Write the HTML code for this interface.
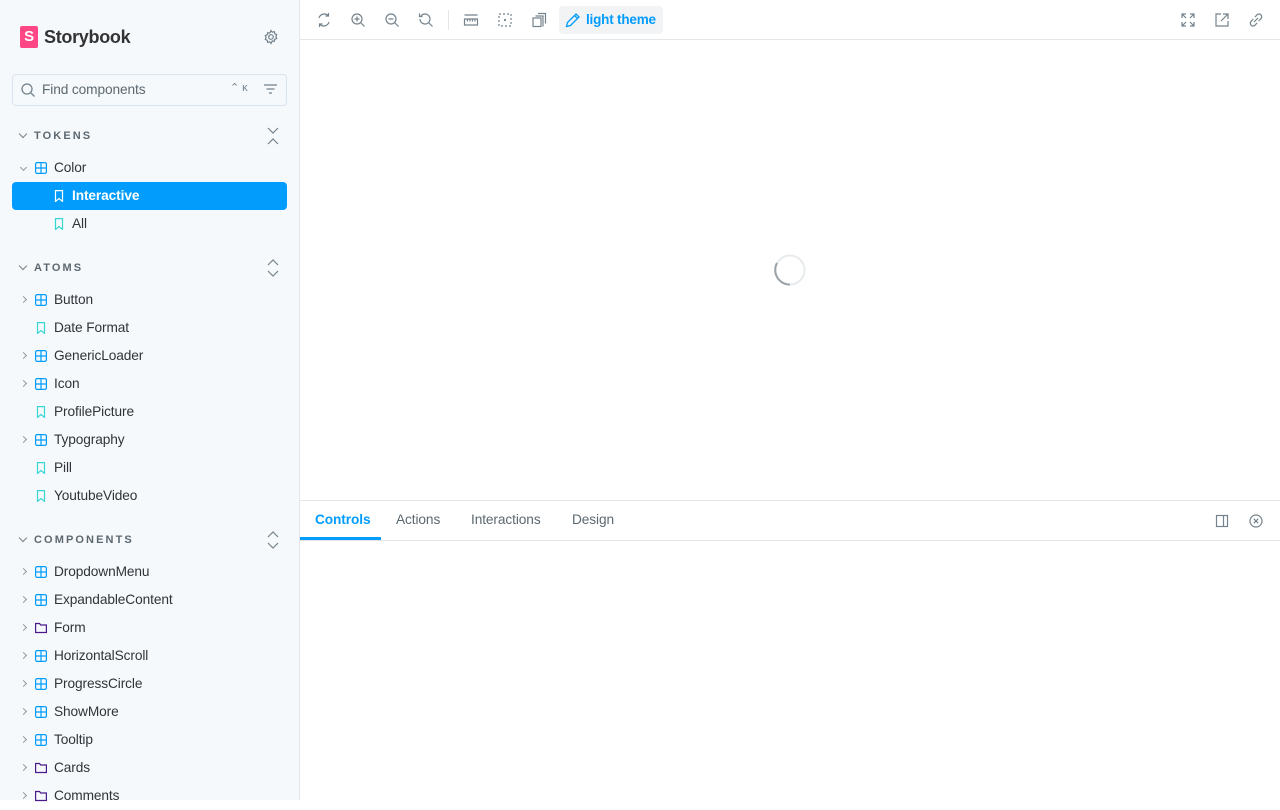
<!DOCTYPE html>
<html><head><meta charset="utf-8"><style>
*{box-sizing:border-box;margin:0;padding:0}
body{width:1280px;height:800px;overflow:hidden;font-family:"Liberation Sans",sans-serif;font-size:13.7px;letter-spacing:-0.1px;color:#2e3438;background:#fff;position:relative}
.sb{position:absolute;left:0;top:0;width:300px;height:800px;background:#f6f9fc;border-right:1px solid #e3e6e8}
.logo{position:absolute;left:20px;top:26px;display:flex;align-items:center;gap:6px;font-weight:bold;font-size:18px;letter-spacing:-0.3px;color:#333}
.s{width:18px;height:22px;background:#ff4785;border-radius:2px;color:#fff;font-size:15px;text-align:center;line-height:22px;font-weight:bold}
.search{position:absolute;left:12px;top:74px;width:275px;height:32px;border:1px solid #d9e4ee;border-radius:4px;background:#f6f9fc;color:#5c6870;font-size:13.7px;line-height:30px;padding-left:29px}
.hdr{position:absolute;left:18px;font-size:11px;font-weight:bold;letter-spacing:2.1px;color:#5c6870}
.hdr:before{content:"";display:inline-block;width:5px;height:5px;border-right:1px solid #798186;border-bottom:1px solid #798186;transform:rotate(45deg);margin:0 8px -1px 2px;position:relative;top:-3px}
.row{position:absolute;left:12px;width:275px;height:28px;line-height:28px}
.row .t{position:absolute;left:42px}
.row .ch{position:absolute;left:9px;top:11px;width:5px;height:5px;border-right:1px solid #8f979c;border-top:1px solid #8f979c;transform:rotate(45deg)}
.ic{position:absolute;top:8px;left:23px;width:12px;height:12px}
.sel{background:#029cfd;color:#fff;font-weight:bold;border-radius:4px}
.tb{position:absolute;left:300px;top:0;width:980px;height:40px;border-bottom:1px solid #e3e6e8}
.tab{position:absolute;top:512px;font-size:13.7px;color:#5c6870}
svg{position:absolute}
</style></head><body>
<div class="sb">
<div class="logo"><div class="s">S</div>Storybook</div>
<svg style="left:263px;top:29px" width="16" height="16" viewBox="0 0 16 16" fill="none" stroke="#73828c" stroke-width="1.2"><circle cx="8" cy="8" r="2.3"/><path d="M8 1.5l1.3 1.7 2-.6.4 2.1 2 .9-.8 1.9.8 1.9-2 .9-.4 2.1-2-.6L8 14.5l-1.3-1.7-2 .6-.4-2.1-2-.9.8-1.9-.8-1.9 2-.9.4-2.1 2 .6z"/></svg>
<div class="search">Find components</div>
<svg style="left:20px;top:82px" width="16" height="16" viewBox="0 0 16 16" fill="none" stroke="#73828c" stroke-width="1.3"><circle cx="7" cy="7" r="5"/><path d="M11 11l3.5 3.5"/></svg>
<div style="position:absolute;left:230px;top:81px;font-size:11px;color:#73828c">⌃ ĸ</div>
<svg style="left:263px;top:83px" width="15" height="12" viewBox="0 0 15 12" stroke="#73828c" stroke-width="1.2"><path d="M1 2h13M3.5 6h8M6 10h3"/></svg>

<div class="hdr" style="top:130px">TOKENS</div>
<svg style="left:266px;top:127px" width="14" height="18" viewBox="0 0 14 18" fill="none" stroke="#73828c" stroke-width="1.2"><path d="M2 1l5 5 5-5M2 17l5-5 5 5"/></svg>
<div class="row" style="top:154px"><span class="ch" style="transform:rotate(135deg)"></span><svg class="ic" viewBox="0 0 12 12" fill="none" stroke="#029cfd" stroke-width="1.2"><rect x=".6" y=".6" width="10.8" height="10.8" rx="1.5"/><path d="M6 .6v10.8M.6 6h10.8"/></svg><span class="t">Color</span></div>
<div class="row sel" style="top:182px"><svg class="ic" style="left:41px" viewBox="0 0 12 12" fill="none" stroke="#fff" stroke-width="1.2"><path d="M2.5.6h7v10.8L6 8.5l-3.5 2.9z"/></svg><span class="t" style="left:60px">Interactive</span></div>
<div class="row" style="top:210px"><svg class="ic" style="left:41px" viewBox="0 0 12 12" fill="none" stroke="#37d5d3" stroke-width="1.2"><path d="M2.5.6h7v10.8L6 8.5l-3.5 2.9z"/></svg><span class="t" style="left:60px">All</span></div>

<div class="hdr" style="top:262px">ATOMS</div>
<svg style="left:266px;top:259px" width="14" height="18" viewBox="0 0 14 18" fill="none" stroke="#73828c" stroke-width="1.2"><path d="M2 6l5-5 5 5M2 12l5 5 5-5"/></svg>
<div class="hdr" style="top:534px">COMPONENTS</div>
<svg style="left:266px;top:531px" width="14" height="18" viewBox="0 0 14 18" fill="none" stroke="#73828c" stroke-width="1.2"><path d="M2 6l5-5 5 5M2 12l5 5 5-5"/></svg>
<div id="list"></div>
</div>

<div class="tb"></div>
<svg style="left:316px;top:12px" width="16" height="16" viewBox="0 0 16 16" fill="none" stroke="#73828c" stroke-width="1.2"><path d="M3 6a5.5 5.5 0 0 1 9.5-2M13 10a5.5 5.5 0 0 1-9.5 2M12.5 1v3h-3M3.5 15v-3h3"/></svg>
<svg style="left:350px;top:12px" width="16" height="16" viewBox="0 0 16 16" fill="none" stroke="#73828c" stroke-width="1.2"><circle cx="7" cy="7" r="5"/><path d="M11 11l3.5 3.5M7 4.5v5M4.5 7h5"/></svg>
<svg style="left:384px;top:12px" width="16" height="16" viewBox="0 0 16 16" fill="none" stroke="#73828c" stroke-width="1.2"><circle cx="7" cy="7" r="5"/><path d="M11 11l3.5 3.5M4.5 7h5"/></svg>
<svg style="left:418px;top:12px" width="16" height="16" viewBox="0 0 16 16" fill="none" stroke="#73828c" stroke-width="1.2"><path d="M3 4a5 5 0 1 1-1 3M11 11l3.5 3.5M1.5 1.5v3h3"/></svg>
<div style="position:absolute;left:448px;top:10px;width:1px;height:20px;background:#e3e6e8"></div>
<svg style="left:463px;top:12px" width="16" height="16" viewBox="0 0 16 16" fill="none" stroke="#73828c" stroke-width="1.2"><path d="M1.5 3h13M1.5 7h13v6h-13zM4.5 7v2.5M7 7v2.5M9.5 7v2.5M12 7v2.5"/></svg>
<svg style="left:497px;top:12px" width="16" height="16" viewBox="0 0 16 16" fill="none" stroke="#73828c" stroke-width="1.2" stroke-dasharray="2 2"><rect x="2" y="2" width="12" height="12"/><circle cx="8" cy="8" r=".5" stroke-dasharray="none"/></svg>
<svg style="left:531px;top:12px" width="16" height="16" viewBox="0 0 16 16" fill="none" stroke="#73828c" stroke-width="1.2"><rect x="2" y="6" width="8" height="8.5"/><path d="M4.5 4h7.5v10.5M7 1.5h7.5v10"/></svg>
<div style="position:absolute;left:559px;top:6px;width:104px;height:28px;background:#f1f3f5;border-radius:4px;color:#029cfd;font-weight:bold;font-size:13.5px;letter-spacing:-0.2px;line-height:28px;padding-left:27px">light theme</div>
<svg style="left:565px;top:12px" width="16" height="16" viewBox="0 0 16 16" fill="none" stroke="#029cfd" stroke-width="1.3"><path d="M11 2l3 3-8.5 8.5-4 1 1-4zM9.5 3.5l3 3"/></svg>
<svg style="left:1181px;top:13px" width="14" height="14" viewBox="0 0 14 14" fill="none" stroke="#73828c" stroke-width="1.2"><path d="M1 5V1h4M9 1h4v4M13 9v4H9M5 13H1V9M1 1l4 4M13 1L9 5M13 13L9 9M1 13l4-4"/></svg>
<svg style="left:1215px;top:13px" width="14" height="14" viewBox="0 0 14 14" fill="none" stroke="#73828c" stroke-width="1.2"><path d="M6 1H1v12h12V8M8 1h5v5M13 1L6 8"/></svg>
<svg style="left:1249px;top:13px" width="14" height="14" viewBox="0 0 14 14" fill="none" stroke="#73828c" stroke-width="1.2"><path d="M6 4l2-2.2a2.6 2.6 0 0 1 3.9 3.9L9.7 8M8 10l-2 2.2a2.6 2.6 0 0 1-3.9-3.9L4.3 6M5 9l4-4"/></svg>
<svg style="left:774px;top:254px" width="32" height="32" viewBox="0 0 32 32" fill="none"><circle cx="16" cy="16" r="14.5" stroke="#e8ebed" stroke-width="2"/><path d="M16 30.5A14.5 14.5 0 0 1 3 9" stroke="#9aa2a8" stroke-width="2"/></svg>

<div style="position:absolute;left:300px;top:500px;width:980px;height:41px;border-top:1px solid #e3e6e8;border-bottom:1px solid #e3e6e8"></div>
<div class="tab" style="left:315px;color:#029cfd;font-weight:bold">Controls</div>
<div style="position:absolute;left:300px;top:537px;width:81px;height:3px;background:#029cfd"></div>
<div class="tab" style="left:396px">Actions</div>
<div class="tab" style="left:471px">Interactions</div>
<div class="tab" style="left:572px">Design</div>
<svg style="left:1215px;top:514px" width="14" height="14" viewBox="0 0 14 14" fill="none" stroke="#73828c" stroke-width="1.2"><rect x="1.5" y="1.5" width="11" height="11"/><path d="M8.5 1.5v11"/></svg>
<svg style="left:1249px;top:514px" width="14" height="14" viewBox="0 0 14 14" fill="none" stroke="#73828c" stroke-width="1.2"><circle cx="7" cy="7" r="6"/><path d="M4.8 4.8l4.4 4.4M9.2 4.8L4.8 9.2"/></svg>

<script>
var comp='<svg class="ic" viewBox="0 0 12 12" fill="none" stroke="#029cfd" stroke-width="1.2"><rect x=".6" y=".6" width="10.8" height="10.8" rx="1.5"/><path d="M6 .6v10.8M.6 6h10.8"/></svg>';
var story='<svg class="ic" viewBox="0 0 12 12" fill="none" stroke="#37d5d3" stroke-width="1.2"><path d="M2.5.6h7v10.8L6 8.5l-3.5 2.9z"/></svg>';
var fold='<svg class="ic" viewBox="0 0 12 12" fill="none" stroke="#4a1a8a" stroke-width="1.2"><path d="M.6 1.5h4l1 1.5h5.8v7.5H.6z"/></svg>';
var items=[[286,'c','Button'],[314,'s','Date Format'],[342,'c','GenericLoader'],[370,'c','Icon'],[398,'s','ProfilePicture'],[426,'c','Typography'],[454,'s','Pill'],[482,'s','YoutubeVideo'],
[558,'c','DropdownMenu'],[586,'c','ExpandableContent'],[614,'f','Form'],[642,'c','HorizontalScroll'],[670,'c','ProgressCircle'],[698,'c','ShowMore'],[726,'c','Tooltip'],[754,'f','Cards'],[782,'f','Comments']];
var h='';items.forEach(function(i){h+='<div class="row" style="top:'+i[0]+'px">'+(i[1]!='s'?'<span class="ch"></span>':'')+(i[1]=='c'?comp:i[1]=='s'?story:fold)+'<span class="t">'+i[2]+'</span></div>';});
document.getElementById('list').innerHTML=h;
</script>
</body></html>
